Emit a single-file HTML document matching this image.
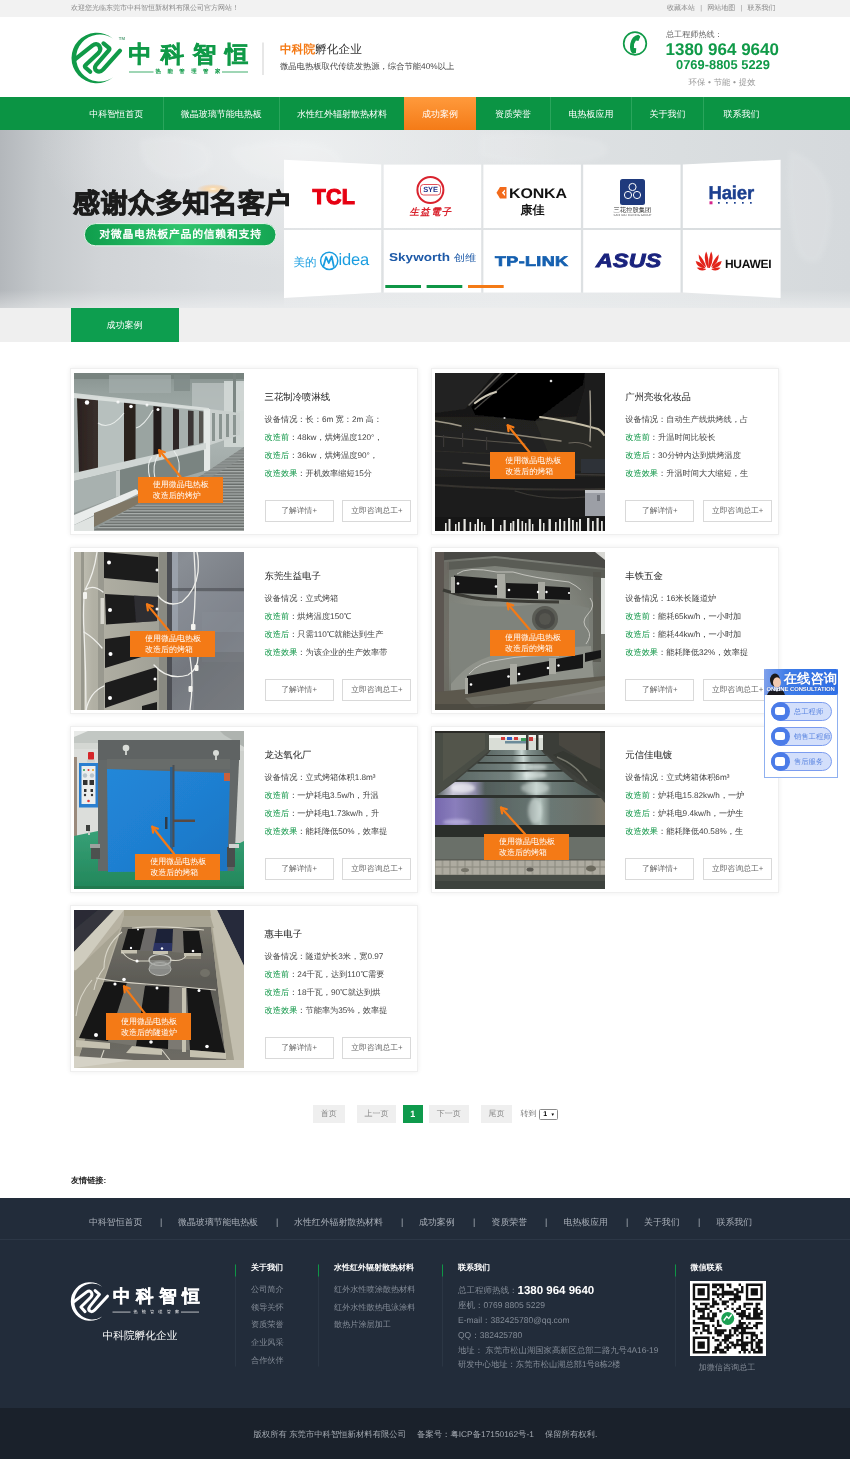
<!DOCTYPE html>
<html lang="zh">
<head>
<meta charset="utf-8">
<title>成功案例</title>
<style>
*{margin:0;padding:0;box-sizing:border-box}
html,body{width:850px;height:1459px;overflow:hidden;background:#fff}
body{opacity:.999;text-rendering:geometricPrecision;font-family:"Liberation Sans",sans-serif;color:#333;position:relative;font-size:8px;line-height:1}
.abs{position:absolute}
a{color:inherit;text-decoration:none}
/* top bar */
#topbar{left:0;top:0;width:850px;height:17px;background:#f2f2f2;color:#8a8a8a;font-size:7px;line-height:17px}
#topbar .l{position:absolute;left:71px;top:0;white-space:nowrap}
#topbar .r{position:absolute;right:74.5px;top:0;white-space:nowrap}
#topbar .r i{font-style:normal;margin:0 5.2px;color:#999}
/* header */
#header{left:0;top:17px;width:850px;height:80px;background:#fff}
#lgname{left:128.5px;top:23.6px;font-family:"Liberation Serif",serif;font-weight:bold;font-size:23.2px;line-height:28px;letter-spacing:9px;color:#109a48;white-space:nowrap;-webkit-text-stroke:.55px #109a48}
#lgsub{left:155.5px;top:52px;font-size:5.4px;line-height:6px;letter-spacing:6.5px;color:#109a48;white-space:nowrap;font-weight:bold}
/* nav */
#nav{left:0;top:97px;width:850px;height:33.7px;background:#0b9444}
#nav .it{position:absolute;top:0;height:33.7px;line-height:35.4px;color:#fff;font-size:9px;text-align:center;white-space:nowrap;border-left:1px solid #2aa55c}
#nav .it.first{border-left:none}
#nav .it.on{background:linear-gradient(#ff9a3c,#f47a16);border-left:none}
/* banner */
#banner{left:0;top:130px;width:850px;height:178px;background:#d5d9dc;overflow:hidden}
#banner{background:radial-gradient(ellipse 260px 120px at 300px 20px,rgba(238,240,241,.95) 0%,rgba(238,240,241,0) 100%),linear-gradient(90deg,#b3b7bb 0%,#c5c9cc 5%,#d1d4d7 12%,#d9dcdf 25%,#dde0e2 40%,#dfe2e4 60%,#dadee0 80%,#d5d9dc 100%)}
.lg{white-space:nowrap}
#bhead{left:72.800px;top:58px;font-size:27.400px;line-height:32px;font-weight:bold;color:#1c1c1c;-webkit-text-stroke:.8px #1c1c1c;white-space:nowrap;letter-spacing:.05px}
#bpill{left:84.400px;top:93.600px;width:191.600px;height:22.200px;line-height:22.200px;text-align:center;color:#fff;font-size:10.900px;white-space:nowrap;font-weight:bold;letter-spacing:.72px;padding-left:.7px}
/* tabbar */
#tabbar{left:0;top:308px;width:850px;height:34px;background:#efefef}
#tabbar .t{position:absolute;left:70.5px;top:0;width:108px;height:34px;background:#0d9e4f;color:#fff;font-size:9px;line-height:34px;text-align:center}
/* cards */
.card{position:absolute;width:348px;height:166.6px;background:#fff;border:1px solid #efefef;box-shadow:0 0 5px rgba(0,0,0,.07)}
.card .ph{position:absolute;left:2.9px;top:3.9px;width:169.8px;height:158px;overflow:hidden;background:#888}
.card h3{position:absolute;left:193.2px;top:21.4px;font-size:9.4px;font-weight:normal;color:#222;white-space:nowrap;line-height:12px}
.card p{position:absolute;left:193.2px;font-size:8.2px;color:#444;white-space:nowrap;line-height:12px}
.card p b{font-weight:normal;color:#0e9646}
.card .btn{position:absolute;top:130.6px;width:69px;height:22px;border:1px solid #d9d9d9;font-size:7.8px;color:#666;text-align:center;line-height:20px;background:#fff}
.tag{position:absolute;background:#f47a16;color:#fff;font-size:8px;line-height:11px;text-align:left;white-space:nowrap}
/* pager */
.pg{position:absolute;top:1105px;height:18px;background:#efefef;color:#888;font-size:8px;line-height:18px;text-align:center}
.wp{position:absolute;left:5.600px;width:61px;height:19px;border:1px solid #7b9cf0;border-radius:9.500px;background:#d3dffb;color:#5b85e0;font-size:7.300px;line-height:17px;padding-left:22px;white-space:nowrap}
.wp i{position:absolute;left:-1px;top:-1px;width:19px;height:19px;border-radius:50%;background:#4a7be8}
.wp i:after{content:"";position:absolute;left:4.500px;top:5px;width:10px;height:8.500px;background:#fff;border-radius:2.500px}
#fnav span,#fnav i{position:absolute;top:19.500px;font-size:8.900px;line-height:10px;color:#a9afb8;white-space:nowrap;font-style:normal}
#flgname{left:113px;top:87.600px;font-family:"Liberation Serif",serif;font-weight:bold;font-size:17.500px;line-height:22px;letter-spacing:5.600px;color:#fff;white-space:nowrap;-webkit-text-stroke:.4px #fff}
#flgsub{left:133.500px;top:111.500px;font-size:4.200px;line-height:5px;letter-spacing:4.100px;color:#fff;white-space:nowrap}
.fh{position:absolute;top:65.300px;font-size:8px;line-height:10px;color:#fff;font-weight:bold;white-space:nowrap}
.fc{font-size:8.5px !important}
.fl{position:absolute;font-size:8.15px;line-height:10px;color:#848c97;margin-top:1.5px;white-space:nowrap}
/* footer */
#footer{left:0;top:1197.5px;width:850px;height:210px;background:#222c3a}
#fbot{left:0;top:1407.5px;width:850px;height:52px;background:#1a212b}
</style>
</head>
<body>
<div id="topbar" class="abs"><span class="l">欢迎您光临东莞市中科智恒新材料有限公司官方网站！</span><span class="r">收藏本站<i>|</i>网站地图<i>|</i>联系我们</span></div>
<div id="header" class="abs">
<svg class="abs" style="left:0;top:0" width="850" height="80" viewBox="0 17 850 80">
 <g fill="none" stroke="#109a48" stroke-width="4.2" stroke-linecap="round" stroke-linejoin="round">
  <path d="M75.6,58.8 L92.3,45.6 Q96.6,42.3 99.4,46.1 Q101.6,49.8 98.2,53.3 L85.6,65 Q84.2,66.3 85.4,67.5 L90.2,71.8"/>
  <path d="M103.5,43.4 L108.6,47.6 Q110,48.9 108.8,50.3 L96.4,64.6 Q93.4,68.6 96.6,70.9 Q99.9,72.9 103.2,69.4 L120,50.7"/>
 </g>
 <path d="M112.8,38.4 A25.3,25.3 0 1,0 112.8,77.6 A23.55,23.55 0 1,1 112.8,38.4 Z" fill="#109a48"/>
 <rect x="129" y="71.6" width="24.5" height="0.8" fill="#109a48"/>
 <rect x="222" y="71.6" width="26" height="0.8" fill="#109a48"/>
 <rect x="262.5" y="42.5" width="1" height="32.5" fill="#cfcfcf"/>
 <!-- phone icon -->
 <circle cx="635" cy="43.5" r="11.3" fill="#fff" stroke="#109a48" stroke-width="1.7"/>
 <path transform="translate(634.5,44) scale(1.18) translate(-634.3,-43.3)" d="M637.5,35.5 q-5.5,1 -6.8,7.5 q-1,6.5 2.2,8.6 l2.6,-0.6 l0.3,-4 l-2,-0.4 q-0.5,-3.5 1.7,-6.2 l2.1,0.3 l1.7,-3.8 z" fill="#109a48"/>
</svg>
<div class="abs" style="left:118.8px;top:18.6px;font-size:4.3px;line-height:5px;color:#5aa37c;font-weight:bold">TM</div>
<div class="abs" id="lgname">中科智恒</div>
<div class="abs" id="lgsub">热能管理管家</div>
<div class="abs" style="left:280px;top:26px;font-size:11.7px;line-height:14px;color:#333;white-space:nowrap"><b style="color:#f47a16">中科院</b>孵化企业</div>
<div class="abs" style="left:280px;top:44px;font-size:8.3px;line-height:10px;color:#444;white-space:nowrap">微晶电热板取代传统发热源，综合节能40%以上</div>
<div class="abs" style="left:666px;top:13.2px;font-size:8.1px;line-height:10px;color:#666;white-space:nowrap">总工程师热线：</div>
<div class="abs" style="left:665.5px;top:22.5px;font-size:17px;line-height:20px;color:#109a48;font-weight:bold;white-space:nowrap">1380 964 9640</div>
<div class="abs" style="left:676px;top:40px;font-size:12.9px;line-height:15px;color:#109a48;font-weight:bold;white-space:nowrap">0769-8805 5229</div>
<div class="abs" style="left:688.5px;top:59.5px;font-size:8.4px;line-height:10px;color:#999;white-space:nowrap;word-spacing:.4px">环保 • 节能 • 提效</div>
</div>
<div id="nav" class="abs">
<div class="it first" style="left:70px;width:92.5px">中科智恒首页</div>
<div class="it" style="left:162.5px;width:116.5px">微晶玻璃节能电热板</div>
<div class="it" style="left:279px;width:125px">水性红外辐射散热材料</div>
<div class="it on" style="left:404px;width:72px">成功案例</div>
<div class="it first" style="left:476px;width:74px">资质荣誉</div>
<div class="it" style="left:550px;width:81px">电热板应用</div>
<div class="it" style="left:631px;width:72px">关于我们</div>
<div class="it" style="left:703px;width:76px">联系我们</div>
</div>
<div id="banner" class="abs">
<svg class="abs" style="left:0;top:0" width="850" height="178" viewBox="0 130 850 178">
 <defs>
  <radialGradient id="flare" cx="50%" cy="50%" r="50%"><stop offset="0" stop-color="#fff" stop-opacity="1"/><stop offset=".25" stop-color="#ffd9a0" stop-opacity=".8"/><stop offset="1" stop-color="#ffb060" stop-opacity="0"/></radialGradient>
  <linearGradient id="pill" x1="0" x2="1"><stop offset="0" stop-color="#0f9e4c"/><stop offset=".5" stop-color="#2fc46d"/><stop offset="1" stop-color="#14a552"/></linearGradient>
  <linearGradient id="refl2" x1="0" x2="0" y1="0" y2="1"><stop offset="0" stop-color="#fff" stop-opacity="0"/><stop offset="1" stop-color="#fff" stop-opacity=".38"/></linearGradient>
  <linearGradient id="refl" x1="0" x2="0" y1="0" y2="1"><stop offset="0" stop-color="#fff" stop-opacity=".55"/><stop offset="1" stop-color="#fff" stop-opacity="0"/></linearGradient>
 </defs>
 <!-- faint world map blobs -->
 <g fill="#fff" opacity=".1" style="filter:blur(2px)">
  <path d="M140,140 q30,-8 60,2 q18,10 8,28 q-22,14 -40,8 q-30,-8 -28,-38z"/>
  <path d="M230,150 q40,-14 90,-6 q30,10 20,30 q-30,12 -60,6 q-40,-4 -50,-30z"/>
  <path d="M480,135 q60,-6 120,6 q20,12 -10,20 q-60,8 -110,-4z"/>
  <path d="M790,150 q30,10 40,40 q6,40 -10,70 q-20,10 -26,-20 q-10,-50 -4,-90z"/>
 </g>
 <rect x="0" y="290" width="850" height="18" fill="url(#refl2)"/>
 <!-- tile reflection -->
 <polygon points="284,298 381,292.5 780,292.5 780,298 780,308 284,308" fill="url(#refl)" opacity=".5"/>
 <!-- tiles -->
 <g fill="#fff">
  <polygon points="284,159.7 381.2,164.6 381.2,228 284,228"/>
  <polygon points="284,230 381.2,230 381.2,292.6 284,298"/>
  <rect x="383.7" y="164.6" width="97.5" height="63.4"/><rect x="383.7" y="230" width="97.5" height="62.6"/>
  <rect x="483.4" y="164.6" width="97.5" height="63.4"/><rect x="483.4" y="230" width="97.5" height="62.6"/>
  <rect x="583.2" y="164.6" width="97.3" height="63.4"/><rect x="583.2" y="230" width="97.3" height="62.6"/>
  <polygon points="682.8,164.6 780.6,159.7 780.6,228 682.8,228"/>
  <polygon points="682.8,230 780.6,230 780.6,298 682.8,292.6"/>
 </g>
 <!-- indicator bars -->
 <rect x="385.3" y="285" width="35.7" height="3" fill="#0e9646"/>
 <rect x="426.6" y="285" width="35.7" height="3" fill="#0e9646"/>
 <rect x="468" y="285" width="35.7" height="3" fill="#f47a16"/>
 <!-- pill -->
 <rect x="84.4" y="223.6" width="191.6" height="22.2" rx="11.1" fill="url(#pill)" stroke="#e8f5ec" stroke-width="1"/>
 <!-- flare -->
 <ellipse cx="213" cy="189" rx="16" ry="5" fill="url(#flare)"/>
 <!-- logos -->
 <!-- SYE -->
 <circle cx="430.4" cy="190" r="13" fill="#fff" stroke="#d9232e" stroke-width="2"/>
 <rect x="420.5" y="184.5" width="20" height="10.5" rx="3" fill="#fff" stroke="#d9232e" stroke-width=".8"/>
 <!-- KONKA icon -->
 <path d="M500,187 h6.5 v11.5 h-6.5 l-3.5,-5.7z" fill="#f26a1b"/><path d="M505,189.5 l-3.2,3.2 l3.2,3.3 v-2.2 l-1.2,-1.1 l1.2,-1.1z" fill="#fff"/>
 <!-- Sanhua -->
 <rect x="620" y="179" width="25" height="26" rx="2.5" fill="#1f3a7d"/>
 <g fill="none" stroke="#fff" stroke-width="1"><circle cx="632.5" cy="187" r="3.6"/><circle cx="628" cy="195" r="3.6"/><circle cx="637" cy="195" r="3.6"/></g>
 <!-- Haier dots -->
 <rect x="709.5" y="201.3" width="3" height="3" fill="#d5248a"/>
 <g fill="#1b3f8f"><rect x="718" y="202" width="1.7" height="1.7"/><rect x="726" y="202" width="1.7" height="1.7"/><rect x="734" y="202" width="1.7" height="1.7"/><rect x="742" y="202" width="1.7" height="1.7"/><rect x="750" y="202" width="1.7" height="1.7"/></g>
 <!-- Midea ring -->
 <circle cx="329.2" cy="260.8" r="8.6" fill="none" stroke="#1a9de0" stroke-width="1.5"/>
 <path d="M323.5,266 l2.6,-9 l2.6,6 l3,-6.5 l2,9.5" fill="none" stroke="#1a9de0" stroke-width="1.8" stroke-linejoin="round" stroke-linecap="round"/>
 <!-- Huawei flower -->
 <g fill="#e2231a" transform="translate(708.7,268)">
  <path d="M-1,0 q-5,-9 -1.5,-16.5 q3,7 2.5,16.5z"/>
  <path d="M1,0 q5,-9 1.5,-16.5 q-3,7 -2.5,16.5z"/>
  <path d="M-2.5,-.5 q-8,-5 -7.5,-13 q5.5,5 7.5,13z"/>
  <path d="M2.500,-.5 q8,-5 7.5,-13 q-5.500,5 -7.5,13z"/>
  <path d="M-3,.5 q-9,-.5 -10,-7.500 q7,1.500 10,7.500z"/>
  <path d="M3,.5 q9,-.5 10,-7.500 q-7,1.500 -10,7.500z"/>
  <path d="M-2.500,1.500 q-6,2.500 -9.500,-1.800 q5.500,-.6 9.500,1.800z"/>
  <path d="M2.500,1.500 q6,2.500 9.500,-1.800 q-5.500,-.6 -9.500,1.800z"/>
 </g>
</svg>
<div class="abs" id="bhead" lang="zh-CN">感谢众多知名客户</div>
<div class="abs" id="bpill" lang="zh-CN">对微晶电热板产品的信赖和支持</div>
<div class="abs lg" style="left:312.500px;top:54.500px;font-size:21.500px;line-height:24px;color:#e60012;font-weight:bold;-webkit-text-stroke:1.100px #e60012;letter-spacing:.3px">TCL</div>
<div class="abs lg" style="left:421.500px;top:55.200px;width:18px;text-align:center;font-size:7.500px;line-height:10px;color:#24348b;font-weight:bold;letter-spacing:-.2px">SYE</div>
<div class="abs lg" style="left:409.500px;top:76.500px;font-size:9.500px;line-height:12px;color:#d9232e;font-weight:bold;letter-spacing:1.200px;font-style:italic">生益電子</div>
<div class="abs lg" style="left:508.500px;top:54.500px;font-size:14px;line-height:16px;color:#111;font-weight:bold;letter-spacing:-.1px;transform:scaleX(1.14);transform-origin:0 0">KONKA</div>
<div class="abs lg" style="left:520.500px;top:73px;font-size:12px;line-height:14px;color:#111;font-weight:bold">康佳</div>
<div class="abs lg" style="left:613.500px;top:77px;font-size:6.300px;line-height:7px;color:#333">三花控股集团</div>
<div class="abs lg" style="left:613.500px;top:83.500px;font-size:2.800px;line-height:3px;color:#555;letter-spacing:.1px">SANHUA HOLDING GROUP</div>
<div class="abs lg" style="left:708.500px;top:52.500px;font-size:18.600px;line-height:20px;color:#1b3f8f;font-weight:bold;letter-spacing:-.2px;-webkit-text-stroke:.4px #1b3f8f">Haier</div>
<div class="abs lg" style="left:293.500px;top:126.500px;font-size:11.500px;line-height:13px;color:#1a9de0">美的</div>
<div class="abs lg" style="left:338.500px;top:121px;font-size:16.500px;line-height:19px;color:#1a9de0;letter-spacing:-.2px">idea</div>
<div class="abs lg" style="left:389px;top:120.500px;font-size:11.500px;line-height:14px;color:#1e5aa8;font-weight:bold;transform:scaleX(1.180);transform-origin:0 0">Skyworth <span style="font-size:9.500px;font-weight:normal">创维</span></div>
<div class="abs lg" style="left:495px;top:122.500px;font-size:14px;line-height:16px;color:#1560b0;font-weight:bold;-webkit-text-stroke:.7px #1560b0;transform:scaleX(1.280);transform-origin:0 0;letter-spacing:.3px">TP-LINK</div>
<div class="abs lg" style="left:596px;top:121px;font-size:19px;line-height:22px;color:#1a237e;font-weight:bold;font-style:italic;-webkit-text-stroke:.9px #1a237e;transform:scaleX(1.220);transform-origin:0 0;letter-spacing:.2px">ASUS</div>
<div class="abs lg" style="left:725px;top:126.500px;font-size:12px;line-height:14px;color:#111;font-weight:bold;letter-spacing:-.3px">HUAWEI</div>
</div>
<div id="tabbar" class="abs"><div class="t">成功案例</div></div>
<svg width="0" height="0" style="position:absolute"><defs><filter id="phblur" x="-5%" y="-5%" width="110%" height="110%"><feGaussianBlur stdDeviation=".55"/></filter></defs></svg>
<div id="cards"><div class="card" style="left:70.4px;top:368.2px"><div class="ph"><svg width="170" height="158" viewBox="0 0 170 158" style="display:block"><g id="ph1">
<defs>
<linearGradient id="p1bg" x1="0" y1="0" x2="0" y2="1"><stop offset="0" stop-color="#87928f"/><stop offset=".12" stop-color="#96a19e"/><stop offset=".45" stop-color="#aab3b1"/><stop offset="1" stop-color="#8c9492"/></linearGradient>
<pattern id="mesh" width="5" height="2.8" patternUnits="userSpaceOnUse"><rect width="5" height="2.8" fill="#686d6b"/><rect width="5" height="1.3" fill="#a9aeac"/></pattern>
<linearGradient id="p1dk" x1="0" y1="0" x2="1" y2="0"><stop offset="0" stop-color="#2a211e"/><stop offset="1" stop-color="#3a302c"/></linearGradient>
</defs>
<rect width="170" height="158" fill="url(#p1bg)"/>
<rect x="0" y="0" width="170" height="6" fill="#78837f"/>
<rect x="35" y="2" width="62" height="18" fill="#a4aeac" opacity=".7"/>
<rect x="100" y="2" width="16" height="16" fill="#7f8b88" opacity=".8"/>
<rect x="118" y="10" width="52" height="28" fill="#b9c1bf" opacity=".8"/>
<rect x="150" y="8" width="20" height="66" fill="#d2d8d6" opacity=".9"/>
<rect x="159" y="0" width="3" height="70" fill="#7b8683"/>
<!-- wall behind panels -->
<polygon points="0,22 135,36 135,72 0,100" fill="#a7b0ae"/>
<polygon points="24,24 50,28 50,92 24,98" fill="#b7c0be"/>
<polygon points="62,30 79,33 79,84 62,89" fill="#9aa4a1"/>
<!-- far frames -->
<polygon points="136,36 166,40 166,62 136,72" fill="#c9cfcd"/>
<g fill="#8a9491"><rect x="138" y="40" width="3" height="28"/><rect x="145" y="41" width="3" height="25"/><rect x="152" y="41" width="3" height="23"/><rect x="159" y="42" width="3" height="20"/></g>
<!-- dark panels -->
<polygon points="3,25 24,27 24,98 5,100" fill="url(#p1dk)"/>
<polygon points="50,29 61.600,31 61.600,89.500 50,90.500" fill="#2b221f"/>
<polygon points="79.400,33 87.400,34 87.400,81 79.400,82.500" fill="#241d1b"/>
<polygon points="99,35.600 105,36.500 105,76 99,77" fill="#2d2826"/>
<polygon points="114,37.600 119.600,38 119.600,72 114,73" fill="#3a3634"/>
<polygon points="125,38 129.600,38.500 129.600,69.500 125,70.500" fill="#55524f"/>
<rect x="129.600" y="36" width="6.500" height="62" fill="#e4e8e6"/>
<!-- top rail highlight -->
<polygon points="0,20 135,35 135,38 0,25" fill="#dfe4e2" opacity=".85"/>
<g fill="#fff"><circle cx="13" cy="29.500" r="2.200"/><circle cx="57" cy="33.500" r="1.800"/><circle cx="84" cy="36.500" r="1.500"/><circle cx="44" cy="29" r="1.600" opacity=".8"/><circle cx="73" cy="32" r="1.500" opacity=".8"/></g>
<!-- lower ledge -->
<polygon points="0,100 132,70 132,76 0,108" fill="#cfd5d3"/>
<polygon points="0,108 42,98 42,124 0,140" fill="#a8b1af"/>
<polygon points="42,98 130,77 130,98 42,124" fill="#7a8481"/>
<polygon points="42,98 46,97 46,123 42,124" fill="#c5cbc9"/>
<!-- wires -->
<g fill="none" stroke="#e8ecea" stroke-width="1.100"><path d="M24,50 q12,8 26,-10"/><path d="M62,55 q8,-2 17,-18"/><path d="M84,82 q-6,10 -3,24"/><path d="M100,78 q8,10 4,26"/><path d="M78,84 q-6,6 -2,22"/></g>
<!-- conveyor -->
<polygon points="170,74 170,158 18,158 62,132 128,102" fill="url(#mesh)"/>
<polygon points="128,102 170,74 170,84 134,106" fill="#8a908e" opacity=".7"/>
<!-- bottom-left beam -->
<polygon points="0,142 62,116 66,120 0,152" fill="#e9eceb"/>
<polygon points="20,140 66,122 66,130 20,154" fill="#7f7766"/>
<polygon points="0,152 20,143 20,158 0,158" fill="#dfe3e1"/>
<g stroke="#f47a16" stroke-width="2.2" fill="none" stroke-linecap="round" stroke-linejoin="round"><path d="M106.5,103.7 L85.2,77.2"/><path d="M86.0,83.2 L85.2,77.2 L90.8,79.2"/></g></g><use href="#ph1" filter="url(#phblur)"/></svg><div class="tag" style="left:63.5px;top:103.7px;width:85px;height:26.3px;padding:2.2px 0 0 15px">使用微晶电热板<br>改造后的烤炉</div></div><h3>三花制冷喷淋线</h3><p style="top:45.3px">设备情况：长：6m 宽：2m 高：</p><p style="top:63.2px"><b>改造前</b>：48kw，烘烤温度120°，</p><p style="top:80.6px"><b>改造后</b>：36kw，烘烤温度90°，</p><p style="top:98.4px"><b>改造效果</b>：开机效率缩短15分</p><div class="btn" style="left:193.2px">了解详情+</div><div class="btn" style="left:271.1px">立即咨询总工+</div></div>
<div class="card" style="left:431.1px;top:368.2px"><div class="ph"><svg width="170" height="158" viewBox="0 0 170 158" style="display:block"><g id="ph2">
<defs>
<linearGradient id="p2bg" x1="0" y1="0" x2="0" y2="1"><stop offset="0" stop-color="#161616"/><stop offset=".5" stop-color="#1c1b1a"/><stop offset="1" stop-color="#181716"/></linearGradient>
</defs>
<rect width="170" height="158" fill="url(#p2bg)"/>
<rect x="0" y="44" width="170" height="60" fill="#2a2927" opacity=".55"/>
<rect x="0" y="104" width="170" height="40" fill="#222120" opacity=".6"/>
<polygon points="100,48 170,40 170,100 120,96" fill="#2f2e2c" opacity=".6"/>
<polygon points="70,0 150,0 148,12 100,48 40,42 36,34" fill="#050506"/>
<polygon points="0,0 60,0 30,36 0,40" fill="#232322" opacity=".9"/>
<polygon points="150,0 170,0 170,60 140,50 150,14" fill="#1f1e1d"/>
<g fill="none" stroke-linecap="round">
<path d="M34,32 L66,0" stroke="#6d6a64" stroke-width="1.500"/>
<path d="M40,36 L82,0" stroke="#4d4b47" stroke-width="1.200"/>
<path d="M40,30 q10,-8 21,-11" stroke="#cfc9b8" stroke-width="2.200"/>
<path d="M105,44 q30,4 58,12 q4,2 6,6" stroke="#c7bfa8" stroke-width="2"/>
<path d="M0,48 q14,2 26,5" stroke="#9e9888" stroke-width="1.600"/>
<path d="M40,56 q40,6 86,12" stroke="#8d8778" stroke-width="1.500"/>
<path d="M0,63 q40,4 90,8" stroke="#56534c" stroke-width="1.200"/>
<path d="M155,18 q1,30 0,50" stroke="#aaa496" stroke-width="1.300"/>
<path d="M28,90 q20,2 30,3" stroke="#8f897a" stroke-width="1.500"/>
<path d="M0,96 q60,4 170,6" stroke="#3a3835" stroke-width="1.500"/>
<path d="M0,112 q80,6 170,4" stroke="#34322f" stroke-width="2"/>
<path d="M80,118 q30,10 70,6" stroke="#3b3936" stroke-width="1.200"/>
<path d="M134,70 q12,-2 22,4" stroke="#6d685e" stroke-width="1.200"/>
<path d="M0,78 q70,4 120,3" stroke="#2f2e2b" stroke-width="1.200"/>
</g>
<circle cx="116" cy="8" r="1.300" fill="#ddd"/><circle cx="69.500" cy="45" r="1.100" fill="#ccc"/>
<g fill="#3a3937"><rect x="8" y="62" width="1.200" height="12"/><rect x="27" y="60" width="1.200" height="14"/><rect x="51" y="64" width="1.200" height="13"/></g>
<rect x="146" y="86" width="24" height="14" fill="#2e3038"/>
<rect x="150" y="119" width="20" height="24" fill="#9c9fa6"/><rect x="150" y="117" width="20" height="3" fill="#c3c5c9"/><rect x="162" y="122" width="3" height="6" fill="#70737a"/>
<g fill="#e6e6e2">
<rect x="10" y="150" width="1.600" height="8"/><rect x="13.500" y="146" width="2" height="12"/><rect x="20" y="151" width="1.500" height="7"/><rect x="23" y="149" width="1.800" height="9"/><rect x="28.500" y="146" width="2.200" height="12"/><rect x="34.500" y="149" width="1.600" height="9"/><rect x="39.500" y="151" width="1.600" height="7"/><rect x="42" y="146" width="2" height="12"/><rect x="46" y="149" width="1.600" height="9"/><rect x="49" y="152" width="1.400" height="6"/><rect x="57" y="146" width="2" height="12"/><rect x="65" y="152" width="1.400" height="6"/><rect x="68.500" y="147" width="2.200" height="11"/><rect x="75" y="150" width="1.600" height="8"/><rect x="77.500" y="148" width="1.800" height="10"/><rect x="82" y="146" width="2.200" height="12"/><rect x="86.500" y="148" width="1.600" height="10"/><rect x="90" y="150" width="1.500" height="8"/><rect x="93.500" y="146" width="2.200" height="12"/><rect x="97" y="151" width="1.400" height="7"/><rect x="104" y="146" width="2.200" height="12"/><rect x="108" y="150" width="1.500" height="8"/><rect x="113.500" y="146" width="2.400" height="12"/><rect x="120" y="149" width="1.600" height="9"/><rect x="124" y="146" width="2" height="12"/><rect x="128.500" y="148" width="1.800" height="10"/><rect x="133" y="145" width="2.200" height="13"/><rect x="137" y="147" width="1.800" height="11"/><rect x="141" y="149" width="1.600" height="9"/><rect x="144" y="146" width="2" height="12"/><rect x="152" y="145" width="2.400" height="13"/><rect x="157" y="148" width="1.800" height="10"/><rect x="161.500" y="145" width="2.200" height="13"/><rect x="166" y="148" width="1.800" height="10"/>
</g>
<g stroke="#f47a16" stroke-width="2.2" fill="none" stroke-linecap="round" stroke-linejoin="round"><path d="M94.5,79.3 L72.7,52.3"/><path d="M73.5,58.2 L72.7,52.3 L78.4,54.3"/></g></g><use href="#ph2" filter="url(#phblur)"/></svg><div class="tag" style="left:55.3px;top:79.3px;width:85px;height:26.3px;padding:2.2px 0 0 15px">使用微晶电热板<br>改造后的烤箱</div></div><h3>广州亮妆化妆品</h3><p style="top:45.3px">设备情况：自动生产线烘烤线，占</p><p style="top:63.2px"><b>改造前</b>：升温时间比较长</p><p style="top:80.6px"><b>改造后</b>：30分钟内达到烘烤温度</p><p style="top:98.4px"><b>改造效果</b>：升温时间大大缩短，生</p><div class="btn" style="left:193.2px">了解详情+</div><div class="btn" style="left:271.1px">立即咨询总工+</div></div>
<div class="card" style="left:70.4px;top:547.2px"><div class="ph"><svg width="170" height="158" viewBox="0 0 170 158" style="display:block"><g id="ph3">
<defs>
<linearGradient id="p3r" x1="0" y1="0" x2="1" y2="1"><stop offset="0" stop-color="#6d7177"/><stop offset=".35" stop-color="#898e95"/><stop offset=".7" stop-color="#73777e"/><stop offset="1" stop-color="#85898e"/></linearGradient>
<linearGradient id="p3l" x1="0" y1="0" x2="1" y2="0"><stop offset="0" stop-color="#c9c7bb"/><stop offset=".2" stop-color="#b1b0a4"/><stop offset="1" stop-color="#9e9e94"/></linearGradient>
</defs>
<rect width="170" height="158" fill="url(#p3r)"/>
<rect x="0" y="0" width="97" height="158" fill="url(#p3l)"/>
<rect x="0" y="0" width="7" height="158" fill="#b9b7ab"/>
<rect x="7" y="0" width="3" height="158" fill="#88877d" opacity=".7"/>
<rect x="24" y="0" width="6" height="158" fill="#8b8b82" opacity=".6"/>
<rect x="85" y="0" width="10" height="158" fill="#8a8a82"/>
<rect x="93" y="0" width="5" height="158" fill="#4e5054"/>
<rect x="98" y="0" width="6" height="100" fill="#a3aab5" opacity=".7"/>
<rect x="98" y="36" width="72" height="3" fill="#4a4d52" opacity=".6"/>
<rect x="104" y="40" width="66" height="40" fill="#9196a0" opacity=".4"/><rect x="128" y="60" width="42" height="50" fill="#8a8f98" opacity=".35"/>
<rect x="120" y="100" width="50" height="58" fill="#696d72" opacity=".5"/>
<g fill="#1d1c1e">
<polygon points="30,0 84,5 84,31 30,26"/>
<polygon points="31,42 84,45 83,69 32,72.500"/>
<polygon points="31,87 84,80 84,100 31,116"/>
<polygon points="31,131 83,115 83,138 31,156"/>
<polygon points="68,154 83,150 83,158 68,158"/>
</g>
<g fill="#34343a" opacity=".7"><polygon points="60,43.500 84,45 83,69 62,70.500"/></g>
<g fill="#fff"><circle cx="35" cy="10.500" r="2"/><circle cx="36" cy="58" r="2"/><circle cx="36.500" cy="102" r="2"/><circle cx="36" cy="146" r="2"/><circle cx="83" cy="18" r="1.500"/><circle cx="83" cy="57" r="1.500"/><circle cx="81" cy="127" r="1.500"/></g>
<rect x="26.500" y="46" width="3.500" height="26" fill="#d8d7cf"/>
<g fill="none" stroke="#eeeeea" stroke-width="1.300" stroke-linecap="round">
<path d="M23,0 q-3,22 -12,38 q8,-6 18,2"/>
<path d="M10,44 q-1,20 0,36 q10,6 18,16"/>
<path d="M10,80 q2,40 2,78"/>
<path d="M12,158 q4,-18 18,-24"/>
<path d="M84,44 q10,12 24,6 q14,-12 16,-30 q1,-12 -1,-20"/>
<path d="M120,0 q3,40 -1,75"/>
<path d="M116,105 q4,24 0,53"/>
<path d="M80,113 q14,16 34,10 q10,-6 10,-18"/>
</g>
<g fill="#f4f4f0"><rect x="117" y="72" width="4.500" height="6" rx="1"/><rect x="120.500" y="113" width="4" height="6" rx="1"/><rect x="114.500" y="134" width="4" height="6" rx="1"/><rect x="9" y="40" width="4" height="7" rx="1"/></g>
<g stroke="#f47a16" stroke-width="2.2" fill="none" stroke-linecap="round" stroke-linejoin="round"><path d="M94.8,78.5 L73.0,52.4"/><path d="M73.9,58.3 L73.0,52.4 L78.7,54.3"/></g></g><use href="#ph3" filter="url(#phblur)"/></svg><div class="tag" style="left:55.7px;top:78.5px;width:85px;height:26.3px;padding:2.2px 0 0 15px">使用微晶电热板<br>改造后的烤箱</div></div><h3>东莞生益电子</h3><p style="top:45.3px">设备情况：立式烤箱</p><p style="top:63.2px"><b>改造前</b>：烘烤温度150℃</p><p style="top:80.6px"><b>改造后</b>：只需110℃就能达到生产</p><p style="top:98.4px"><b>改造效果</b>：为该企业的生产效率带</p><div class="btn" style="left:193.2px">了解详情+</div><div class="btn" style="left:271.1px">立即咨询总工+</div></div>
<div class="card" style="left:431.1px;top:547.2px"><div class="ph"><svg width="170" height="158" viewBox="0 0 170 158" style="display:block"><g id="ph4">
<defs>
<radialGradient id="p4bg" cx="45%" cy="50%" r="70%"><stop offset="0" stop-color="#94978f"/><stop offset=".6" stop-color="#7e8179"/><stop offset="1" stop-color="#64665f"/></radialGradient>
</defs>
<rect width="170" height="158" fill="url(#p4bg)"/>
<polygon points="0,0 170,0 170,16 60,4 10,8 0,12" fill="#484844"/>
<polygon points="12,10 60,6 170,18 170,26 60,14 12,18" fill="#5a5b55"/>
<rect x="0" y="0" width="9" height="158" fill="#5b5751"/>
<rect x="9" y="10" width="5" height="130" fill="#6a6962" opacity=".8"/>
<polygon points="160,0 170,0 170,8" fill="#d8d8d4"/>
<rect x="166" y="26" width="4" height="56" fill="#dfe2de"/>
<rect x="158" y="20" width="8" height="90" fill="#55564f" opacity=".8"/>
<!-- lower curved darker panel -->
<path d="M14,50 q40,8 90,2 q30,-2 50,4 L154,96 q-60,-4 -90,8 q-30,10 -48,30 Z" fill="#7f837b"/>
<path d="M16,132 q20,-26 50,-30 q40,-6 90,-8 L160,140 L16,146z" fill="#8f928a"/>
<!-- bottom -->
<polygon points="0,140 170,124 170,158 0,158" fill="#5b584e"/>
<polygon points="30,146 170,128 170,140 40,156" fill="#77776c" opacity=".8"/>
<polygon points="100,150 170,134 170,158 90,158" fill="#8b8c84" opacity=".7"/>
<rect x="0" y="152" width="170" height="6" fill="#4a4840" opacity=".8"/>
<!-- dark strap -->
<path d="M8,38 q30,10 56,10 q20,2 60,2" fill="none" stroke="#3a3a36" stroke-width="3"/>
<!-- circle -->
<circle cx="110" cy="67" r="13" fill="#5a5b55"/><circle cx="110" cy="67" r="10" fill="#494a45"/><circle cx="110" cy="67" r="6" fill="#55554f"/>
<!-- panels -->
<g fill="#191919">
<polygon points="19,23.600 62,27 62,43 19,41"/>
<polygon points="71,31 104,32 104,47 71,46"/>
<polygon points="109,34 135,35.600 135,48 109,47"/>
<polygon points="32,124 75,116 75,134 32,142"/>
<polygon points="81,115 114,109 114,123 81,130"/>
<polygon points="121,107 148,102 148,116 121,120"/>
<polygon points="150,101 166,98 166,106 150,110"/>
</g>
<g fill="#a9aaa2"><rect x="62" y="22" width="8" height="24"/><rect x="103" y="30" width="7" height="17"/><rect x="75" y="112" width="7" height="20"/><rect x="114" y="106" width="7" height="16"/><rect x="16" y="25" width="4" height="16"/><rect x="30" y="126" width="3" height="16"/></g>
<g fill="#fff"><circle cx="23" cy="31.500" r="1.300"/><circle cx="61" cy="34.500" r="1.300"/><circle cx="74" cy="38" r="1.300"/><circle cx="103" cy="40" r="1.200"/><circle cx="111.500" cy="40" r="1.200"/><circle cx="134" cy="41" r="1.100"/><circle cx="36" cy="132.500" r="1.300"/><circle cx="73.500" cy="124.500" r="1.300"/><circle cx="84" cy="122" r="1.300"/><circle cx="113" cy="116" r="1.300"/><circle cx="123.500" cy="113.500" r="1.200"/></g>
<g fill="none" stroke="#c9cac4" stroke-width=".9"><path d="M22,22 q10,-8 40,-2 q10,0 16,0 q20,6 56,10 q8,4 12,8"/><path d="M155,46 q6,8 -2,16 q-8,8 0,16 q4,6 -2,14"/><path d="M34,122 q10,-12 30,-14 q30,-6 60,-4"/></g>
<g stroke="#f47a16" stroke-width="2.2" fill="none" stroke-linecap="round" stroke-linejoin="round"><path d="M95.0,78.0 L72.5,51.5"/><path d="M73.4,57.4 L72.5,51.5 L78.2,53.4"/></g></g><use href="#ph4" filter="url(#phblur)"/></svg><div class="tag" style="left:55px;top:78px;width:85px;height:26.3px;padding:2.2px 0 0 15px">使用微晶电热板<br>改造后的烤箱</div></div><h3>丰铁五金</h3><p style="top:45.3px">设备情况：16米长隧道炉</p><p style="top:63.2px"><b>改造前</b>：能耗65kw/h，一小时加</p><p style="top:80.6px"><b>改造后</b>：能耗44kw/h，一小时加</p><p style="top:98.4px"><b>改造效果</b>：能耗降低32%，效率提</p><div class="btn" style="left:193.2px">了解详情+</div><div class="btn" style="left:271.1px">立即咨询总工+</div></div>
<div class="card" style="left:70.4px;top:726.2px"><div class="ph"><svg width="170" height="158" viewBox="0 0 170 158" style="display:block"><g id="ph5">
<defs>
<linearGradient id="p5bl" x1="0" y1="0" x2="1" y2="1"><stop offset="0" stop-color="#2287d8"/><stop offset=".5" stop-color="#1f7fd1"/><stop offset="1" stop-color="#1c74c2"/></linearGradient>
<linearGradient id="p5fl" x1="0" y1="0" x2="0" y2="1"><stop offset="0" stop-color="#37a077"/><stop offset="1" stop-color="#22865a"/></linearGradient>
</defs>
<rect width="170" height="158" fill="#d4d7d3"/>
<rect x="0" y="0" width="170" height="12" fill="#c2c7c3"/>
<polygon points="0,0 14,0 0,6" fill="#e8eae8"/>
<polygon points="146,0 170,0 170,16 150,4" fill="#aeb3af"/>
<rect x="0" y="18" width="24" height="88" fill="#dcdedb"/>
<rect x="0" y="26" width="3" height="80" fill="#9a8a7c"/>
<polygon points="166,20 170,20 170,118 161,118" fill="#cdd0cc"/>
<!-- floor -->
<polygon points="0,105 24,100 24,112 166,112 170,110 170,158 0,158" fill="url(#p5fl)"/>
<!-- oven frame -->
<polygon points="24,9 166,9 160,140 24,140" fill="#636867"/>
<rect x="24" y="9" width="142" height="20" fill="#5f6463"/>
<rect x="33" y="28" width="123" height="10" fill="#676c6a"/>
<!-- doors -->
<polygon points="33,38 156,42 153.500,140 34,141" fill="url(#p5bl)"/>
<rect x="96" y="36" width="3" height="86" fill="#2c5f8f"/>
<rect x="98.500" y="34" width="2" height="82" fill="#4b4f52"/>
<rect x="99" y="88.500" width="22" height="2.500" fill="#5a4a40"/>
<rect x="91" y="86" width="2.500" height="12" fill="#2d3b48"/>
<rect x="150" y="42" width="6" height="8" fill="#c7603a"/>
<!-- gauges -->
<circle cx="52" cy="17" r="3.300" fill="#d9dcd8"/><rect x="51" y="20" width="2" height="4" fill="#c8cbc7"/>
<circle cx="142" cy="22" r="3" fill="#d9dcd8"/><rect x="141" y="25" width="2" height="4" fill="#c8cbc7"/>
<!-- control box -->
<rect x="5" y="32" width="19" height="44.500" fill="#2a7fd0"/>
<rect x="7.500" y="35" width="14" height="38" fill="#eceeed"/>
<g fill="#333"><rect x="9" y="49" width="4.500" height="5"/><rect x="15.500" y="49" width="4.500" height="5"/><rect x="10" y="58" width="2.500" height="3"/><rect x="16.500" y="58" width="2.500" height="3"/><circle cx="11" cy="64" r="1.200"/><circle cx="18" cy="64" r="1.200"/></g>
<circle cx="11" cy="44.500" r="2.200" fill="#b9c5cc"/><circle cx="18" cy="44.500" r="2.200" fill="#b9c5cc"/>
<circle cx="10" cy="39" r="1" fill="#2a9a4a"/><circle cx="14.500" cy="39" r="1" fill="#d33"/><circle cx="19" cy="39" r="1" fill="#e6a020"/><circle cx="14.500" cy="70" r="1.300" fill="#d33"/>
<rect x="14" y="21" width="6" height="8" rx="1" fill="#d5282c"/><rect x="13" y="28.500" width="8" height="3" fill="#cfd2ce"/>
<!-- feet -->
<rect x="17" y="114" width="9" height="14" fill="#4d5150"/><rect x="16" y="113" width="10" height="4" fill="#9da19f"/>
<rect x="153" y="116" width="8" height="20" fill="#4a4e4d"/><rect x="155" y="113" width="10" height="4" fill="#d0d3d1"/>
<rect x="12" y="94" width="4" height="6" fill="#3c3f3e"/><rect x="14" y="100" width="2" height="4" fill="#c8cbc9"/>
<rect x="0" y="155" width="170" height="3" fill="#207a50"/>
<g stroke="#f47a16" stroke-width="2.2" fill="none" stroke-linecap="round" stroke-linejoin="round"><path d="M100.0,122.7 L78.3,95.7"/><path d="M79.1,101.7 L78.3,95.7 L83.9,97.7"/></g></g><use href="#ph5" filter="url(#phblur)"/></svg><div class="tag" style="left:60.9px;top:122.7px;width:85px;height:26.3px;padding:2.2px 0 0 15px">使用微晶电热板<br>改造后的烤箱</div></div><h3>龙达氧化厂</h3><p style="top:45.3px">设备情况：立式烤箱体积1.8m³</p><p style="top:63.2px"><b>改造前</b>：一炉耗电3.5w/h，升温</p><p style="top:80.6px"><b>改造后</b>：一炉耗电1.73kw/h，升</p><p style="top:98.4px"><b>改造效果</b>：能耗降低50%，效率提</p><div class="btn" style="left:193.2px">了解详情+</div><div class="btn" style="left:271.1px">立即咨询总工+</div></div>
<div class="card" style="left:431.1px;top:726.2px"><div class="ph"><svg width="170" height="158" viewBox="0 0 170 158" style="display:block"><g id="ph6">
<defs>
<linearGradient id="p6p" x1="0" y1="0" x2="1" y2="0"><stop offset="0" stop-color="#5d6966"/><stop offset=".45" stop-color="#74827f"/><stop offset=".6" stop-color="#c9d7d3"/><stop offset=".7" stop-color="#83928e"/><stop offset="1" stop-color="#5a6663"/></linearGradient>
<linearGradient id="p6n" x1="0" y1="0" x2="1" y2="0"><stop offset="0" stop-color="#7668ae"/><stop offset=".12" stop-color="#8a7ebc"/><stop offset=".27" stop-color="#6e689a"/><stop offset=".36" stop-color="#5a6664"/><stop offset=".56" stop-color="#65726f"/><stop offset=".62" stop-color="#aebdb8"/><stop offset=".68" stop-color="#6b7874"/><stop offset=".9" stop-color="#6d716a"/><stop offset="1" stop-color="#7b7566"/></linearGradient>
<linearGradient id="p6n2" x1="0" y1="0" x2="1" y2="0"><stop offset="0" stop-color="#55605e"/><stop offset=".1" stop-color="#c9c6d8"/><stop offset=".24" stop-color="#8d8aa8"/><stop offset=".3" stop-color="#515d5a"/><stop offset=".55" stop-color="#63706d"/><stop offset=".62" stop-color="#b4c4bf"/><stop offset=".72" stop-color="#6b7975"/><stop offset="1" stop-color="#4d5956"/></linearGradient>
<pattern id="p6t" width="7.500" height="8" patternUnits="userSpaceOnUse"><rect width="7.500" height="8" fill="#8f8d82"/><rect x=".6" y=".6" width="6.300" height="6.800" fill="#aeaba0"/></pattern>
</defs>
<rect width="170" height="158" fill="#3f423c"/>
<polygon points="0,0 54,0 54,20 0,66" fill="#4a4d45"/>
<polygon points="8,0 50,0 50,18 8,50" fill="#55584f" opacity=".7"/>
<polygon points="108,0 170,0 170,68 108,20" fill="#3b3d38"/>
<polygon points="124,0 165,0 165,40 124,14" fill="#4c4a42" opacity=".8"/>
<rect x="0" y="0" width="170" height="2" fill="#2a2c28"/>
<rect x="54" y="4" width="54" height="15" fill="#d9ddd6"/>
<rect x="54" y="4" width="54" height="3" fill="#f1f3ee"/>
<g><rect x="66" y="6" width="4" height="3" fill="#d33a3a"/><rect x="72" y="6" width="5" height="3" fill="#2f62c9"/><rect x="79" y="6" width="4" height="3" fill="#d33a3a"/><rect x="86" y="7" width="5" height="3" fill="#3a9c58"/><rect x="94" y="6" width="4" height="4" fill="#c83a3a"/><rect x="70" y="10" width="22" height="2.500" fill="#6c8b9a"/></g>
<rect x="91" y="4" width="2.500" height="15" fill="#3a3d38"/><rect x="101" y="4" width="2.500" height="17" fill="#33362f"/>
<!-- panels receding -->
<polygon points="56,19 106,19 110,24 52,24" fill="url(#p6p)"/>
<polygon points="50,25 112,25 118,31 44,31" fill="url(#p6p)"/>
<polygon points="42,32.500 119,32.500 126,39 34,39" fill="url(#p6p)"/>
<polygon points="32,40.500 128,40.500 138,49 22,49" fill="url(#p6p)"/>
<polygon points="20,51 140,51 162,64 2,64" fill="url(#p6n2)"/>
<polygon points="0,67 166,67 170,72 170,94 0,94" fill="url(#p6n)"/>
<g fill="#2e322f"><polygon points="52,24 110,24 111,25 51,25"/><polygon points="44,31 118,31 119,32.500 42,32.500"/><polygon points="34,39 126,39 128,40.500 32,40.500"/><polygon points="22,49 138,49 140,51 20,51"/><polygon points="2,64 162,64 166,67 0,67"/></g>
<g style="filter:blur(1.500px)"><ellipse cx="100" cy="80" rx="7" ry="13" fill="#dfe9e5" opacity=".55"/>
<ellipse cx="100" cy="57" rx="14" ry="6" fill="#dfe9e5" opacity=".5"/>
<ellipse cx="100" cy="44" rx="12" ry="3.500" fill="#e8f0ed" opacity=".6"/>
<ellipse cx="102" cy="36" rx="10" ry="2.500" fill="#e8f0ed" opacity=".6"/>
<ellipse cx="28" cy="57" rx="12" ry="5" fill="#f3f2f8" opacity=".7"/>
<ellipse cx="22" cy="91" rx="14" ry="3" fill="#cfc6ee" opacity=".6"/></g>
<!-- right side clutter -->
<polygon points="118,24 170,62 170,40 128,20" fill="#34362f" opacity=".85"/>
<path d="M122,26 q20,8 30,24" stroke="#77786e" stroke-width="1.500" fill="none"/>
<!-- lower bands -->
<rect x="0" y="94" width="170" height="12" fill="#2b2f2c"/>
<rect x="0" y="106" width="170" height="22" fill="#6b7069"/>
<rect x="0" y="128" width="170" height="16" fill="url(#p6t)"/>
<rect x="0" y="128" width="170" height="1.500" fill="#5c5f58"/>
<ellipse cx="95" cy="138.500" rx="3.500" ry="2" fill="#5c5a52"/><ellipse cx="156" cy="137.500" rx="5" ry="3" fill="#6a675c"/><ellipse cx="30" cy="139" rx="4" ry="2" fill="#77756b"/>
<rect x="0" y="144" width="170" height="14" fill="#4a4e47"/>
<rect x="0" y="150" width="170" height="8" fill="#3e423c"/>
<g stroke="#f47a16" stroke-width="2.2" fill="none" stroke-linecap="round" stroke-linejoin="round"><path d="M90.0,103.0 L66.0,76.5"/><path d="M67.1,82.4 L66.0,76.5 L71.8,78.2"/></g></g><use href="#ph6" filter="url(#phblur)"/></svg><div class="tag" style="left:49px;top:103px;width:85px;height:26.3px;padding:2.2px 0 0 15px">使用微晶电热板<br>改造后的烤箱</div></div><h3>元信佳电镀</h3><p style="top:45.3px">设备情况：立式烤箱体积6m³</p><p style="top:63.2px"><b>改造前</b>：炉耗电15.82kw/h，一炉</p><p style="top:80.6px"><b>改造后</b>：炉耗电9.4kw/h，一炉生</p><p style="top:98.4px"><b>改造效果</b>：能耗降低40.58%，生</p><div class="btn" style="left:193.2px">了解详情+</div><div class="btn" style="left:271.1px">立即咨询总工+</div></div>
<div class="card" style="left:70.4px;top:905.2px"><div class="ph"><svg width="170" height="158" viewBox="0 0 170 158" style="display:block"><g id="ph7">
<defs>
<linearGradient id="p7f" x1="0" y1="0" x2="0" y2="1"><stop offset="0" stop-color="#77746a"/><stop offset=".4" stop-color="#5c5b56"/><stop offset="1" stop-color="#6d6b64"/></linearGradient>
</defs>
<rect width="170" height="158" fill="#b7b2a2"/>
<polygon points="0,0 40,0 0,42" fill="#34363d"/>
<polygon points="0,0 24,0 0,20" fill="#2a2c34"/>
<polygon points="143,0 170,0 170,56" fill="#262b3a"/>
<polygon points="40,0 50,0 4,60 0,60 0,42" fill="#cfccbe"/>
<polygon points="50,0 138,0 138,6 50,6" fill="#a59f8a"/>
<polygon points="136,0 143,0 170,56 170,150 160,150" fill="#c2beae"/>
<polygon points="50,6 136,6 140,18 46,18" fill="#a9a594"/>
<!-- floor -->
<polygon points="48,17 137,17 152,150 4,150" fill="url(#p7f)"/>
<polygon points="46,18 4,150 0,150 0,62" fill="#a8a493"/>
<polygon points="138,17 160,150 152,150 137,17" fill="#a29e8d"/>
<!-- middle gray strips -->
<polygon points="53,72 72,74 62,136 34,132" fill="#77756d"/>
<polygon points="96,77 112,78 116,140 94,139" fill="#7b7972"/>
<polygon points="71,19 84,19 80,41 66,41" fill="#6c6b68"/>
<polygon points="99,19 109,20 110,43 98,42" fill="#74726c"/>
<!-- black panels -->
<g fill="#121214">
<polygon points="54,19 71,19 66,40 48,40"/>
<polygon points="109,21 125,21 129,43 110,43"/>
<polygon points="30,72 53,72 34,131 5,128"/>
<polygon points="71,76 95,77 94,139 62,136"/>
<polygon points="113,78 136,79 151,143 116,140"/>
</g>
<polygon points="83,19 99,19 98,41 79,41" fill="#1d2138"/>
<polygon points="80,33 98,33 98,41 79,41" fill="#2f3a78" opacity=".7"/>
<!-- brackets -->
<g fill="#c5c1b0"><rect x="47" y="40" width="16" height="3.500"/><rect x="79" y="41" width="15" height="3"/><rect x="110" y="43" width="17" height="4"/><polygon points="2,130 36,133 36,139 2,137"/><polygon points="58,136 88,139 88,145 52,143"/><polygon points="116,140 152,143 152,149 116,147"/><rect x="108" y="78" width="4" height="64"/></g>
<rect x="110" y="46" width="17" height="3" fill="#8e8a7a"/>
<!-- beaker -->
<ellipse cx="86" cy="58" rx="11" ry="7.500" fill="#8e8f8c" opacity=".9"/><ellipse cx="86" cy="50" rx="11" ry="5.500" fill="none" stroke="#c9cac6" stroke-width="1.200"/><ellipse cx="86" cy="59" rx="11" ry="6.500" fill="none" stroke="#b9bab5" stroke-width="1"/><rect x="75" y="50" width="22" height="9" fill="#9a9b97" opacity=".5"/>
<ellipse cx="131" cy="63" rx="5" ry="4" fill="#77756c" opacity=".8"/>
<!-- wires & dots -->
<g fill="none" stroke="#d8d5c8" stroke-width="1.100"><path d="M58,18 q30,-3 72,2"/><path d="M48,22 q-18,14 -18,36 q-8,10 -10,22"/><path d="M48,42 q8,10 18,9 l10,0"/><path d="M96,50 q12,2 16,-4"/><path d="M22,68 q20,4 50,6 q30,2 70,6"/><path d="M18,70 q-14,16 -16,36"/><path d="M30,140 q-4,10 -6,18"/><path d="M88,140 q8,10 14,18"/></g>
<g fill="#fff"><circle cx="64" cy="19.500" r="1"/><circle cx="57" cy="38" r="1.200"/><circle cx="88" cy="38.500" r="1.200"/><circle cx="119" cy="41" r="1.300"/><circle cx="41" cy="74" r="1.600"/><circle cx="83" cy="78" r="1.500"/><circle cx="125" cy="80.500" r="1.500"/><circle cx="22" cy="125" r="2"/><circle cx="77" cy="132" r="1.800"/><circle cx="133" cy="136.500" r="1.800"/><circle cx="50" cy="69.500" r="1.800"/><circle cx="63" cy="51" r="1.500"/></g>
<rect x="0" y="150" width="170" height="8" fill="#c9c5b6"/>
<polygon points="0,146 60,150 0,158" fill="#d5d2c6"/>
<g stroke="#f47a16" stroke-width="2.2" fill="none" stroke-linecap="round" stroke-linejoin="round"><path d="M70.9,103.4 L50.0,76.4"/><path d="M50.7,82.4 L50.0,76.4 L55.6,78.5"/></g></g><use href="#ph7" filter="url(#phblur)"/></svg><div class="tag" style="left:31.7px;top:103.4px;width:85px;height:26.3px;padding:2.2px 0 0 15px">使用微晶电热板<br>改造后的隧道炉</div></div><h3>惠丰电子</h3><p style="top:45.3px">设备情况：隧道炉长3米，宽0.97</p><p style="top:63.2px"><b>改造前</b>：24千瓦，达到110℃需要</p><p style="top:80.6px"><b>改造后</b>：18千瓦，90℃就达到烘</p><p style="top:98.4px"><b>改造效果</b>：节能率为35%，效率提</p><div class="btn" style="left:193.2px">了解详情+</div><div class="btn" style="left:271.1px">立即咨询总工+</div></div></div>
<div id="pager">
<div class="pg" style="left:313px;width:31.500px">首页</div>
<div class="pg" style="left:356.700px;width:39.700px">上一页</div>
<div class="pg" style="left:402.800px;width:20px;background:#0e9a4c;color:#fff;font-weight:bold;font-size:9px">1</div>
<div class="pg" style="left:428.700px;width:40.300px">下一页</div>
<div class="pg" style="left:480.600px;width:31.700px">尾页</div>
<div class="abs" style="left:520.500px;top:1105px;font-size:8px;line-height:18px;color:#777">转到</div>
<div class="abs" style="left:539.300px;top:1109px;width:18.600px;height:11px;border:1px solid #8a8a8a;border-radius:1.500px;background:#fff;font-size:7px;line-height:9px;color:#000;font-weight:bold;padding-left:3px">1<span style="position:absolute;right:2px;top:0;font-size:4.500px">▼</span></div>
<div class="abs" style="left:71px;top:1175.600px;font-size:8.100px;line-height:10px;color:#222;font-weight:bold">友情链接:</div>
</div><div id="widget" class="abs" style="left:764.400px;top:669px;width:74px;height:109px;background:#fff;border:1px solid #8fb0f0;border-top:none">
<div class="abs" style="left:-1px;top:0;width:74px;height:26px;background:linear-gradient(90deg,#7fa0ea 0%,#3f7de8 30%,#2f6fe6 100%);border-radius:2px 2px 2px 0;overflow:hidden">
 <svg class="abs" style="left:0;top:0" width="74" height="26" viewBox="0 0 74 26"><ellipse cx="11" cy="11" rx="5" ry="6.500" fill="#1c1a1a"/><ellipse cx="13" cy="13.500" rx="4" ry="5.200" fill="#f2c9b0"/><path d="M3,26 q2,-6 9,-7 q8,1 9,7z" fill="#1a1a20"/><path d="M10,19 l3,4 l2,-4z" fill="#f6f6f6"/></svg>
 <div class="abs" style="left:19.300px;top:1.500px;font-size:13.400px;line-height:15px;color:#fff;font-weight:bold;white-space:nowrap;letter-spacing:0;text-shadow:0 0 1px #1c4fb8">在线咨询</div>
 <div class="abs" style="left:2px;top:17.500px;font-size:5.900px;line-height:6px;color:#fff;font-weight:bold;white-space:nowrap;letter-spacing:-.05px;text-shadow:0 0 1px #1c3f98">ONLINE CONSULTATION</div>
</div>
<div class="wp" style="top:32.500px"><i></i>总工程师</div>
<div class="wp" style="top:57.500px"><i></i>销售工程师</div>
<div class="wp" style="top:83px"><i></i>售后服务</div>
</div>

<div id="footer" class="abs">
<div id="fnav">
<span style="left:89px">中科智恒首页</span><i style="left:160px">|</i>
<span style="left:178px">微晶玻璃节能电热板</span><i style="left:276px">|</i>
<span style="left:294px">水性红外辐射散热材料</span><i style="left:401px">|</i>
<span style="left:419px">成功案例</span><i style="left:473px">|</i>
<span style="left:491.500px">资质荣誉</span><i style="left:545px">|</i>
<span style="left:563.500px">电热板应用</span><i style="left:626px">|</i>
<span style="left:644px">关于我们</span><i style="left:698px">|</i>
<span style="left:716.500px">联系我们</span>
</div>
<div class="abs" style="left:0;top:41px;width:850px;height:1px;background:#2c3746"></div>
<svg class="abs" style="left:0;top:0" width="850" height="210" viewBox="0 1197.500 850 210">
 <g transform="translate(70.800,1281.800) scale(.76) translate(-71.500,-32.700)">
  <g fill="none" stroke="#fff" stroke-width="3.900" stroke-linecap="round" stroke-linejoin="round">
   <path d="M75.800,58.200 L92.500,45.300 Q96.300,42.600 98.600,46.200 Q100.600,49.600 97.400,52.800 L84.800,65.200 L90.300,71.400"/>
   <path d="M103.500,43.600 L109.200,48.600 L96.600,64.300 Q93.600,68.400 96.600,70.600 Q99.800,72.600 103,69.200 L119.800,50.900"/>
  </g>
  <path d="M112.800,38.400 A25.300,25.300 0 1,0 112.800,77.600 A23.550,23.550 0 1,1 112.800,38.400 Z" fill="#fff"/>
 </g>
 <rect x="112.500" y="1311.200" width="18" height=".7" fill="#fff"/><rect x="181" y="1311.200" width="18" height=".7" fill="#fff"/>
 <g fill="#2b3644"><rect x="235" y="1264" width="1" height="102"/><rect x="318" y="1264" width="1" height="102"/><rect x="442" y="1264" width="1" height="102"/><rect x="675" y="1264" width="1" height="102"/></g>
 <g fill="#0e9646"><rect x="235" y="1264" width="1" height="12"/><rect x="318" y="1264" width="1" height="12"/><rect x="442" y="1264" width="1" height="12"/><rect x="675" y="1264" width="1" height="12"/></g>
</svg>
<div class="abs" id="flgname">中科智恒</div>
<div class="abs" id="flgsub">热能管理管家</div>
<div class="abs" style="left:102.500px;top:131.500px;font-size:10.700px;line-height:14px;color:#fff;white-space:nowrap">中科院孵化企业</div>
<div class="fh" style="left:251px">关于我们</div>
<div class="fl" style="left:251px;top:86px">公司简介</div><div class="fl" style="left:251px;top:103.500px">领导关怀</div><div class="fl" style="left:251px;top:121px">资质荣誉</div><div class="fl" style="left:251px;top:138.500px">企业风采</div><div class="fl" style="left:251px;top:156.500px">合作伙伴</div>
<div class="fh" style="left:334px">水性红外辐射散热材料</div>
<div class="fl" style="left:334px;top:86px">红外水性喷涂散热材料</div><div class="fl" style="left:334px;top:103.500px">红外水性散热电泳涂料</div><div class="fl" style="left:334px;top:121px">散热片涂层加工</div>
<div class="fh" style="left:458px">联系我们</div>
<div class="fl fc" style="left:458px;top:85.500px">总工程师热线：<b style="color:#fff;font-size:11.5px;vertical-align:-.5px">1380 964 9640</b></div>
<div class="fl fc" style="left:458px;top:101px">座机：0769 8805 5229</div>
<div class="fl fc" style="left:458px;top:116px">E-mail：382425780@qq.com</div>
<div class="fl fc" style="left:458px;top:130.500px">QQ：382425780</div>
<div class="fl fc" style="left:458px;top:145.500px;font-size:8.33px !important">地址： 东莞市松山湖国家高新区总部二路九号4A16-19</div>
<div class="fl fc" style="left:458px;top:160.500px;font-size:8.28px !important">研发中心地址：东莞市松山湖总部1号8栋2楼</div>
<div class="fh" style="left:690.500px">微信联系</div>
<div class="abs" id="qr" style="left:690px;top:83.500px;width:75.500px;height:75px;background:#fff"><svg width="75.500" height="75" viewBox="-2.750 -2.500 75.500 75" style="display:block"><path d="M0.00,0.00h16.90v2.41h-16.90zM19.31,0.00h12.07v2.41h-12.07zM33.79,0.00h4.83v2.41h-4.83zM45.86,0.00h2.41v2.41h-2.41zM53.10,0.00h16.90v2.41h-16.90zM0.00,2.41h2.41v2.41h-2.41zM14.48,2.41h2.41v2.41h-2.41zM19.31,2.41h4.83v2.41h-4.83zM26.55,2.41h4.83v2.41h-4.83zM36.21,2.41h2.41v2.41h-2.41zM48.28,2.41h2.41v2.41h-2.41zM53.10,2.41h2.41v2.41h-2.41zM67.59,2.41h2.41v2.41h-2.41zM0.00,4.83h2.41v2.41h-2.41zM4.83,4.83h7.24v2.41h-7.24zM14.48,4.83h2.41v2.41h-2.41zM24.14,4.83h2.41v2.41h-2.41zM28.97,4.83h2.41v2.41h-2.41zM41.03,4.83h4.83v2.41h-4.83zM48.28,4.83h2.41v2.41h-2.41zM53.10,4.83h2.41v2.41h-2.41zM57.93,4.83h7.24v2.41h-7.24zM67.59,4.83h2.41v2.41h-2.41zM0.00,7.24h2.41v2.41h-2.41zM4.83,7.24h7.24v2.41h-7.24zM14.48,7.24h2.41v2.41h-2.41zM19.31,7.24h4.83v2.41h-4.83zM28.97,7.24h12.07v2.41h-12.07zM43.45,7.24h7.24v2.41h-7.24zM53.10,7.24h2.41v2.41h-2.41zM57.93,7.24h7.24v2.41h-7.24zM67.59,7.24h2.41v2.41h-2.41zM0.00,9.66h2.41v2.41h-2.41zM4.83,9.66h7.24v2.41h-7.24zM14.48,9.66h2.41v2.41h-2.41zM19.31,9.66h26.55v2.41h-26.55zM53.10,9.66h2.41v2.41h-2.41zM57.93,9.66h7.24v2.41h-7.24zM67.59,9.66h2.41v2.41h-2.41zM0.00,12.07h2.41v2.41h-2.41zM14.48,12.07h2.41v2.41h-2.41zM24.14,12.07h2.41v2.41h-2.41zM28.97,12.07h2.41v2.41h-2.41zM41.03,12.07h7.24v2.41h-7.24zM53.10,12.07h2.41v2.41h-2.41zM67.59,12.07h2.41v2.41h-2.41zM0.00,14.48h16.90v2.41h-16.90zM19.31,14.48h2.41v2.41h-2.41zM26.55,14.48h2.41v2.41h-2.41zM36.21,14.48h12.07v2.41h-12.07zM53.10,14.48h16.90v2.41h-16.90zM19.31,16.90h4.83v2.41h-4.83zM28.97,16.90h7.24v2.41h-7.24zM41.03,16.90h2.41v2.41h-2.41zM0.00,19.31h2.41v2.41h-2.41zM7.24,19.31h9.66v2.41h-9.66zM19.31,19.31h7.24v2.41h-7.24zM28.97,19.31h4.83v2.41h-4.83zM38.62,19.31h2.41v2.41h-2.41zM50.69,19.31h9.66v2.41h-9.66zM62.76,19.31h4.83v2.41h-4.83zM2.41,21.72h2.41v2.41h-2.41zM12.07,21.72h2.41v2.41h-2.41zM16.90,21.72h4.83v2.41h-4.83zM33.79,21.72h2.41v2.41h-2.41zM45.86,21.72h2.41v2.41h-2.41zM50.69,21.72h2.41v2.41h-2.41zM62.76,21.72h2.41v2.41h-2.41zM2.41,24.14h14.48v2.41h-14.48zM24.14,24.14h2.41v2.41h-2.41zM31.38,24.14h2.41v2.41h-2.41zM38.62,24.14h2.41v2.41h-2.41zM43.45,24.14h4.83v2.41h-4.83zM53.10,24.14h4.83v2.41h-4.83zM60.34,24.14h7.24v2.41h-7.24zM0.00,26.55h2.41v2.41h-2.41zM4.83,26.55h7.24v2.41h-7.24zM16.90,26.55h2.41v2.41h-2.41zM26.55,26.55h2.41v2.41h-2.41zM41.03,26.55h2.41v2.41h-2.41zM48.28,26.55h4.83v2.41h-4.83zM60.34,26.55h4.83v2.41h-4.83zM67.59,26.55h2.41v2.41h-2.41zM0.00,28.97h2.41v2.41h-2.41zM9.66,28.97h2.41v2.41h-2.41zM14.48,28.97h2.41v2.41h-2.41zM19.31,28.97h4.83v2.41h-4.83zM43.45,28.97h9.66v2.41h-9.66zM55.52,28.97h2.41v2.41h-2.41zM60.34,28.97h9.66v2.41h-9.66zM0.00,31.38h2.41v2.41h-2.41zM7.24,31.38h4.83v2.41h-4.83zM14.48,31.38h2.41v2.41h-2.41zM19.31,31.38h4.83v2.41h-4.83zM45.86,31.38h12.07v2.41h-12.07zM60.34,31.38h7.24v2.41h-7.24zM4.83,33.79h16.90v2.41h-16.90zM48.28,33.79h2.41v2.41h-2.41zM53.10,33.79h16.90v2.41h-16.90zM0.00,36.21h2.41v2.41h-2.41zM16.90,36.21h4.83v2.41h-4.83zM24.14,36.21h2.41v2.41h-2.41zM45.86,36.21h2.41v2.41h-2.41zM0.00,38.62h12.07v2.41h-12.07zM24.14,38.62h2.41v2.41h-2.41zM45.86,38.62h7.24v2.41h-7.24zM55.52,38.62h2.41v2.41h-2.41zM62.76,38.62h7.24v2.41h-7.24zM9.66,41.03h7.24v2.41h-7.24zM19.31,41.03h2.41v2.41h-2.41zM24.14,41.03h4.83v2.41h-4.83zM43.45,41.03h7.24v2.41h-7.24zM53.10,41.03h2.41v2.41h-2.41zM60.34,41.03h4.83v2.41h-4.83zM0.00,43.45h7.24v2.41h-7.24zM9.66,43.45h2.41v2.41h-2.41zM14.48,43.45h2.41v2.41h-2.41zM21.72,43.45h2.41v2.41h-2.41zM38.62,43.45h21.72v2.41h-21.72zM62.76,43.45h2.41v2.41h-2.41zM0.00,45.86h2.41v2.41h-2.41zM9.66,45.86h7.24v2.41h-7.24zM21.72,45.86h12.07v2.41h-12.07zM36.21,45.86h2.41v2.41h-2.41zM41.03,45.86h4.83v2.41h-4.83zM48.28,45.86h4.83v2.41h-4.83zM2.41,48.28h2.41v2.41h-2.41zM7.24,48.28h2.41v2.41h-2.41zM14.48,48.28h4.83v2.41h-4.83zM21.72,48.28h9.66v2.41h-9.66zM36.21,48.28h2.41v2.41h-2.41zM41.03,48.28h2.41v2.41h-2.41zM45.86,48.28h16.90v2.41h-16.90zM67.59,48.28h2.41v2.41h-2.41zM24.14,50.69h4.83v2.41h-4.83zM31.38,50.69h9.66v2.41h-9.66zM43.45,50.69h2.41v2.41h-2.41zM48.28,50.69h2.41v2.41h-2.41zM57.93,50.69h7.24v2.41h-7.24zM0.00,53.10h16.90v2.41h-16.90zM19.31,53.10h2.41v2.41h-2.41zM31.38,53.10h7.24v2.41h-7.24zM48.28,53.10h2.41v2.41h-2.41zM53.10,53.10h2.41v2.41h-2.41zM57.93,53.10h2.41v2.41h-2.41zM62.76,53.10h2.41v2.41h-2.41zM0.00,55.52h2.41v2.41h-2.41zM14.48,55.52h2.41v2.41h-2.41zM21.72,55.52h4.83v2.41h-4.83zM28.97,55.52h7.24v2.41h-7.24zM43.45,55.52h7.24v2.41h-7.24zM57.93,55.52h4.83v2.41h-4.83zM65.17,55.52h4.83v2.41h-4.83zM0.00,57.93h2.41v2.41h-2.41zM4.83,57.93h7.24v2.41h-7.24zM14.48,57.93h2.41v2.41h-2.41zM26.55,57.93h2.41v2.41h-2.41zM31.38,57.93h2.41v2.41h-2.41zM36.21,57.93h4.83v2.41h-4.83zM43.45,57.93h2.41v2.41h-2.41zM48.28,57.93h12.07v2.41h-12.07zM62.76,57.93h7.24v2.41h-7.24zM0.00,60.34h2.41v2.41h-2.41zM4.83,60.34h7.24v2.41h-7.24zM14.48,60.34h2.41v2.41h-2.41zM24.14,60.34h4.83v2.41h-4.83zM33.79,60.34h2.41v2.41h-2.41zM38.62,60.34h16.90v2.41h-16.90zM57.93,60.34h2.41v2.41h-2.41zM62.76,60.34h4.83v2.41h-4.83zM0.00,62.76h2.41v2.41h-2.41zM4.83,62.76h7.24v2.41h-7.24zM14.48,62.76h2.41v2.41h-2.41zM21.72,62.76h4.83v2.41h-4.83zM31.38,62.76h7.24v2.41h-7.24zM41.03,62.76h2.41v2.41h-2.41zM48.28,62.76h4.83v2.41h-4.83zM57.93,62.76h2.41v2.41h-2.41zM62.76,62.76h7.24v2.41h-7.24zM0.00,65.17h2.41v2.41h-2.41zM14.48,65.17h2.41v2.41h-2.41zM21.72,65.17h9.66v2.41h-9.66zM33.79,65.17h2.41v2.41h-2.41zM48.28,65.17h7.24v2.41h-7.24zM57.93,65.17h4.83v2.41h-4.83zM65.17,65.17h4.83v2.41h-4.83zM0.00,67.59h16.90v2.41h-16.90zM19.31,67.59h4.83v2.41h-4.83zM26.55,67.59h7.24v2.41h-7.24zM45.86,67.59h2.41v2.41h-2.41zM50.69,67.59h2.41v2.41h-2.41zM55.52,67.59h2.41v2.41h-2.41zM60.34,67.59h9.66v2.41h-9.66z" fill="#111"/><circle cx="35" cy="35" r="8.500" fill="#fff"/><circle cx="35" cy="35" r="6.500" fill="#1aa052"/><path d="M31,37 l3,-4 l2,2 l3,-4" stroke="#fff" stroke-width="1.300" fill="none"/></svg></div>
<div class="fl" style="left:698.500px;top:163.500px">加微信咨询总工</div>
</div>
<div id="fbot" class="abs"><div class="abs" style="left:253.500px;top:21.500px;font-size:8.35px;line-height:10px;color:#a3a9b1;white-space:nowrap">版权所有 东莞市中科智恒新材料有限公司<span style="margin-left:11px">备案号：粤ICP备17150162号-1</span><span style="margin-left:11px">保留所有权利.</span></div></div>

</body>
</html>
